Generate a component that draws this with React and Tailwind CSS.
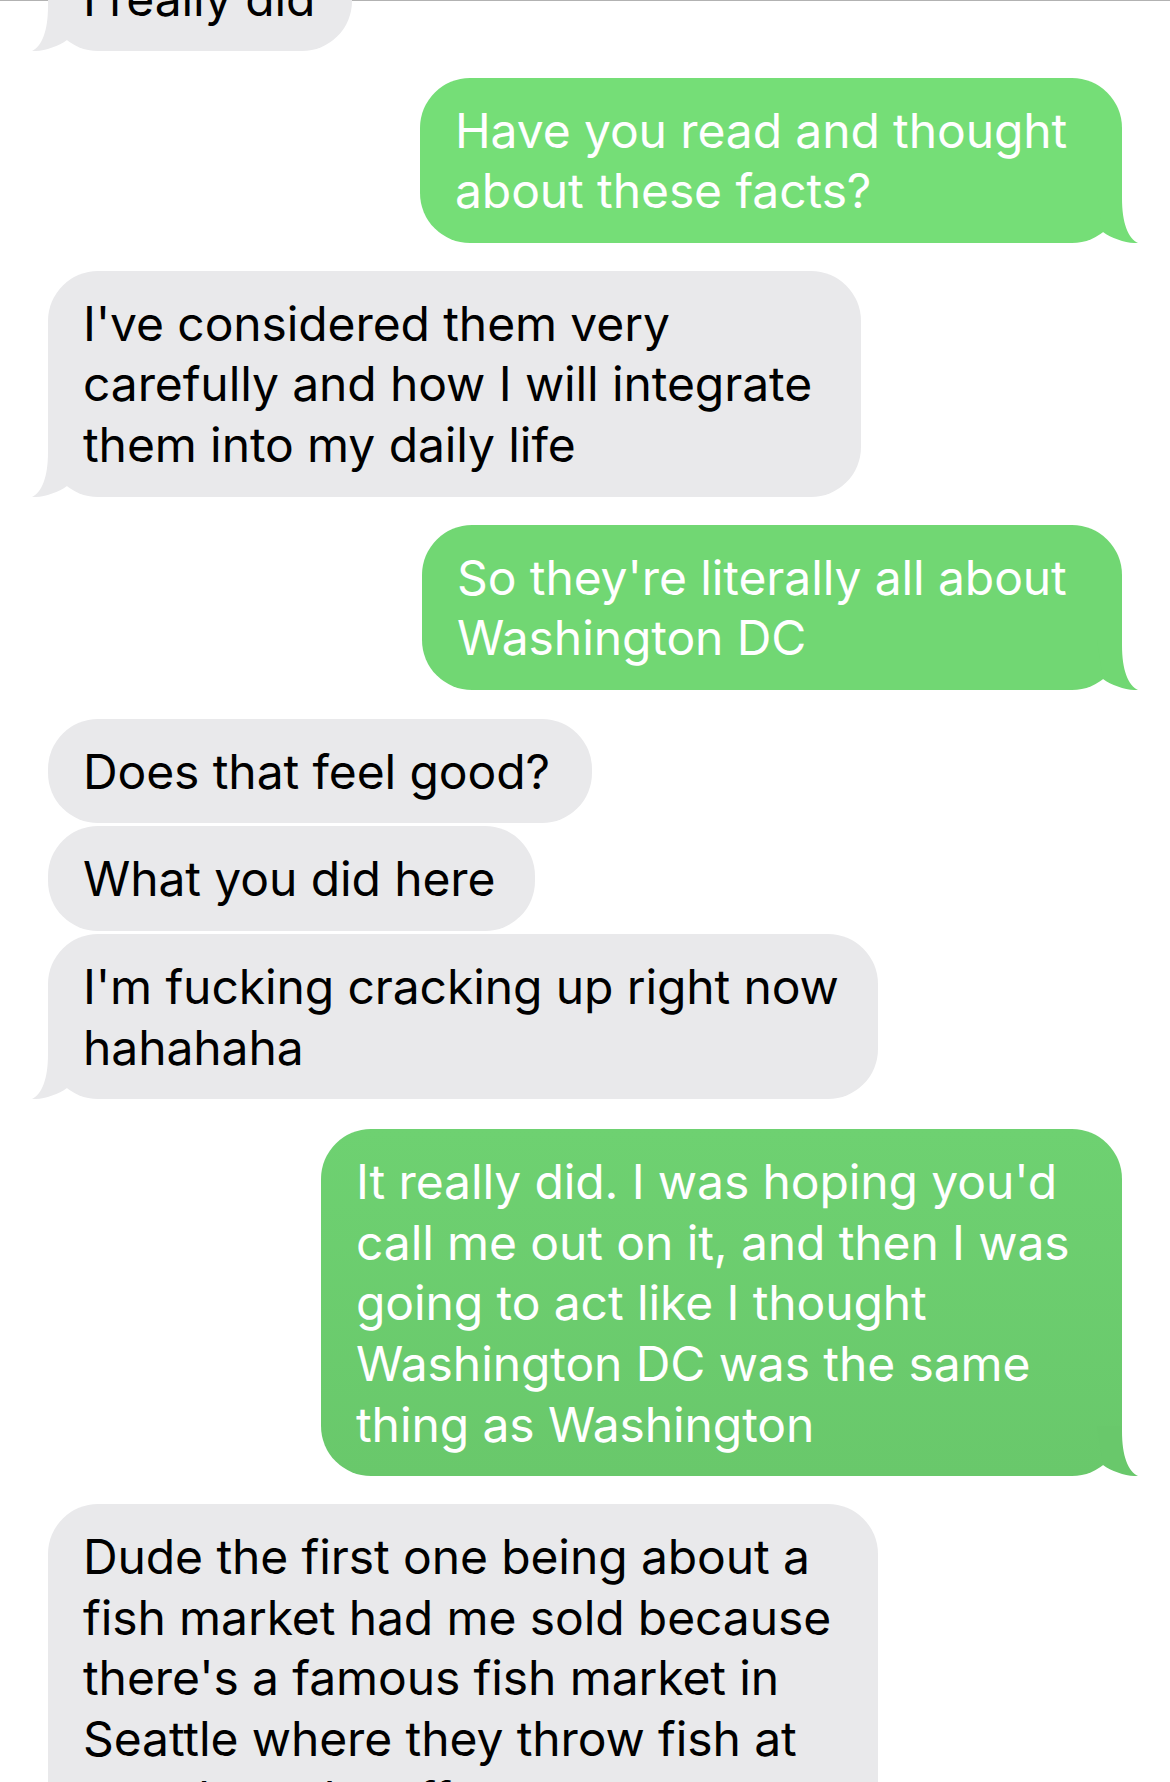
import React from "react";

function GrayTail() {
  return (
    <svg
      className="absolute left-[-16px] bottom-0"
      width="41"
      height="50"
      viewBox="-16 -50 41 50"
      aria-hidden="true"
    >
      <path
        d="M0,-50 L0,-45 C0,-20 -6,-5 -16,0 C-6,0.6 10,-4 19,-11 L25,-50 Z"
        fill="#e9e9eb"
      />
    </svg>
  );
}

function GreenTail({ color }) {
  return (
    <svg
      className="absolute right-[-16px] bottom-0"
      width="41"
      height="50"
      viewBox="-25 -50 41 50"
      aria-hidden="true"
    >
      <path
        d="M0,-50 L0,-45 C0,-20 6,-5 16,0 C6,0.6 -10,-4 -19,-11 L-25,-50 Z"
        fill={color}
      />
    </svg>
  );
}

function Gray({ lines, w, tail, className = "" }) {
  return (
    <div
      className={`relative self-start rounded-[50px] bg-[#e9e9eb] pl-[35px] pt-[23px] pb-[21px] text-black whitespace-nowrap ${w} ${className}`}
    >
      {lines.map((l, i) => (
        <div key={i}>{l}</div>
      ))}
      {tail && <GrayTail />}
    </div>
  );
}

function Green({ lines, w, bg, tailColor, className = "" }) {
  return (
    <div
      className={`relative self-end rounded-[50px] pl-[35px] pt-[23px] pb-[21px] text-white whitespace-nowrap ${w} ${bg} ${className}`}
    >
      {lines.map((l, i) => (
        <div key={i}>{l}</div>
      ))}
      <GreenTail color={tailColor} />
    </div>
  );
}

export default function App() {
  return (
    <div className="h-[1782px] w-[1170px] overflow-hidden bg-white font-['Inter',sans-serif] text-[48px] leading-[60.6px] tracking-[-0.1px]">
      <div className="flex flex-col border-t border-[#b2b2b2] px-[48px]">
        <Gray className="-mt-[55px]" w="w-[304px]" tail lines={["I really did"]} />
        <Green
          className="mt-[27px]"
          w="w-[702px]"
          bg="bg-[#75de77]"
          tailColor="#75de77"
          lines={["Have you read and thought", "about these facts?"]}
        />
        <Gray
          className="mt-[28px]"
          w="w-[813px]"
          tail
          lines={["I've considered them very", "carefully and how I will integrate", "them into my daily life"]}
        />
        <Green
          className="mt-[28px]"
          w="w-[700px]"
          bg="bg-[#71d773]"
          tailColor="#71d773"
          lines={["So they're literally all about", "Washington DC"]}
        />
        <Gray className="mt-[29px]" w="w-[544px]" lines={["Does that feel good?"]} />
        <Gray className="mt-[3px]" w="w-[487px]" lines={["What you did here"]} />
        <Gray
          className="mt-[3px]"
          w="w-[830px]"
          tail
          lines={["I'm fucking cracking up right now", "hahahaha"]}
        />
        <Green
          className="mt-[30px]"
          w="w-[801px]"
          bg="bg-linear-to-b from-[#6ed171] to-[#69c86b]"
          tailColor="#69c86b"
          lines={[
            "It really did. I was hoping you'd",
            "call me out on it, and then I was",
            "going to act like I thought",
            "Washington DC was the same",
            "thing as Washington",
          ]}
        />
        <Gray
          className="mt-[28px]"
          w="w-[830px]"
          tail
          lines={[
            "Dude the first one being about a",
            "fish market had me sold because",
            "there's a famous fish market in",
            "Seattle where they throw fish at",
            "people and stuff",
          ]}
        />
      </div>
    </div>
  );
}
